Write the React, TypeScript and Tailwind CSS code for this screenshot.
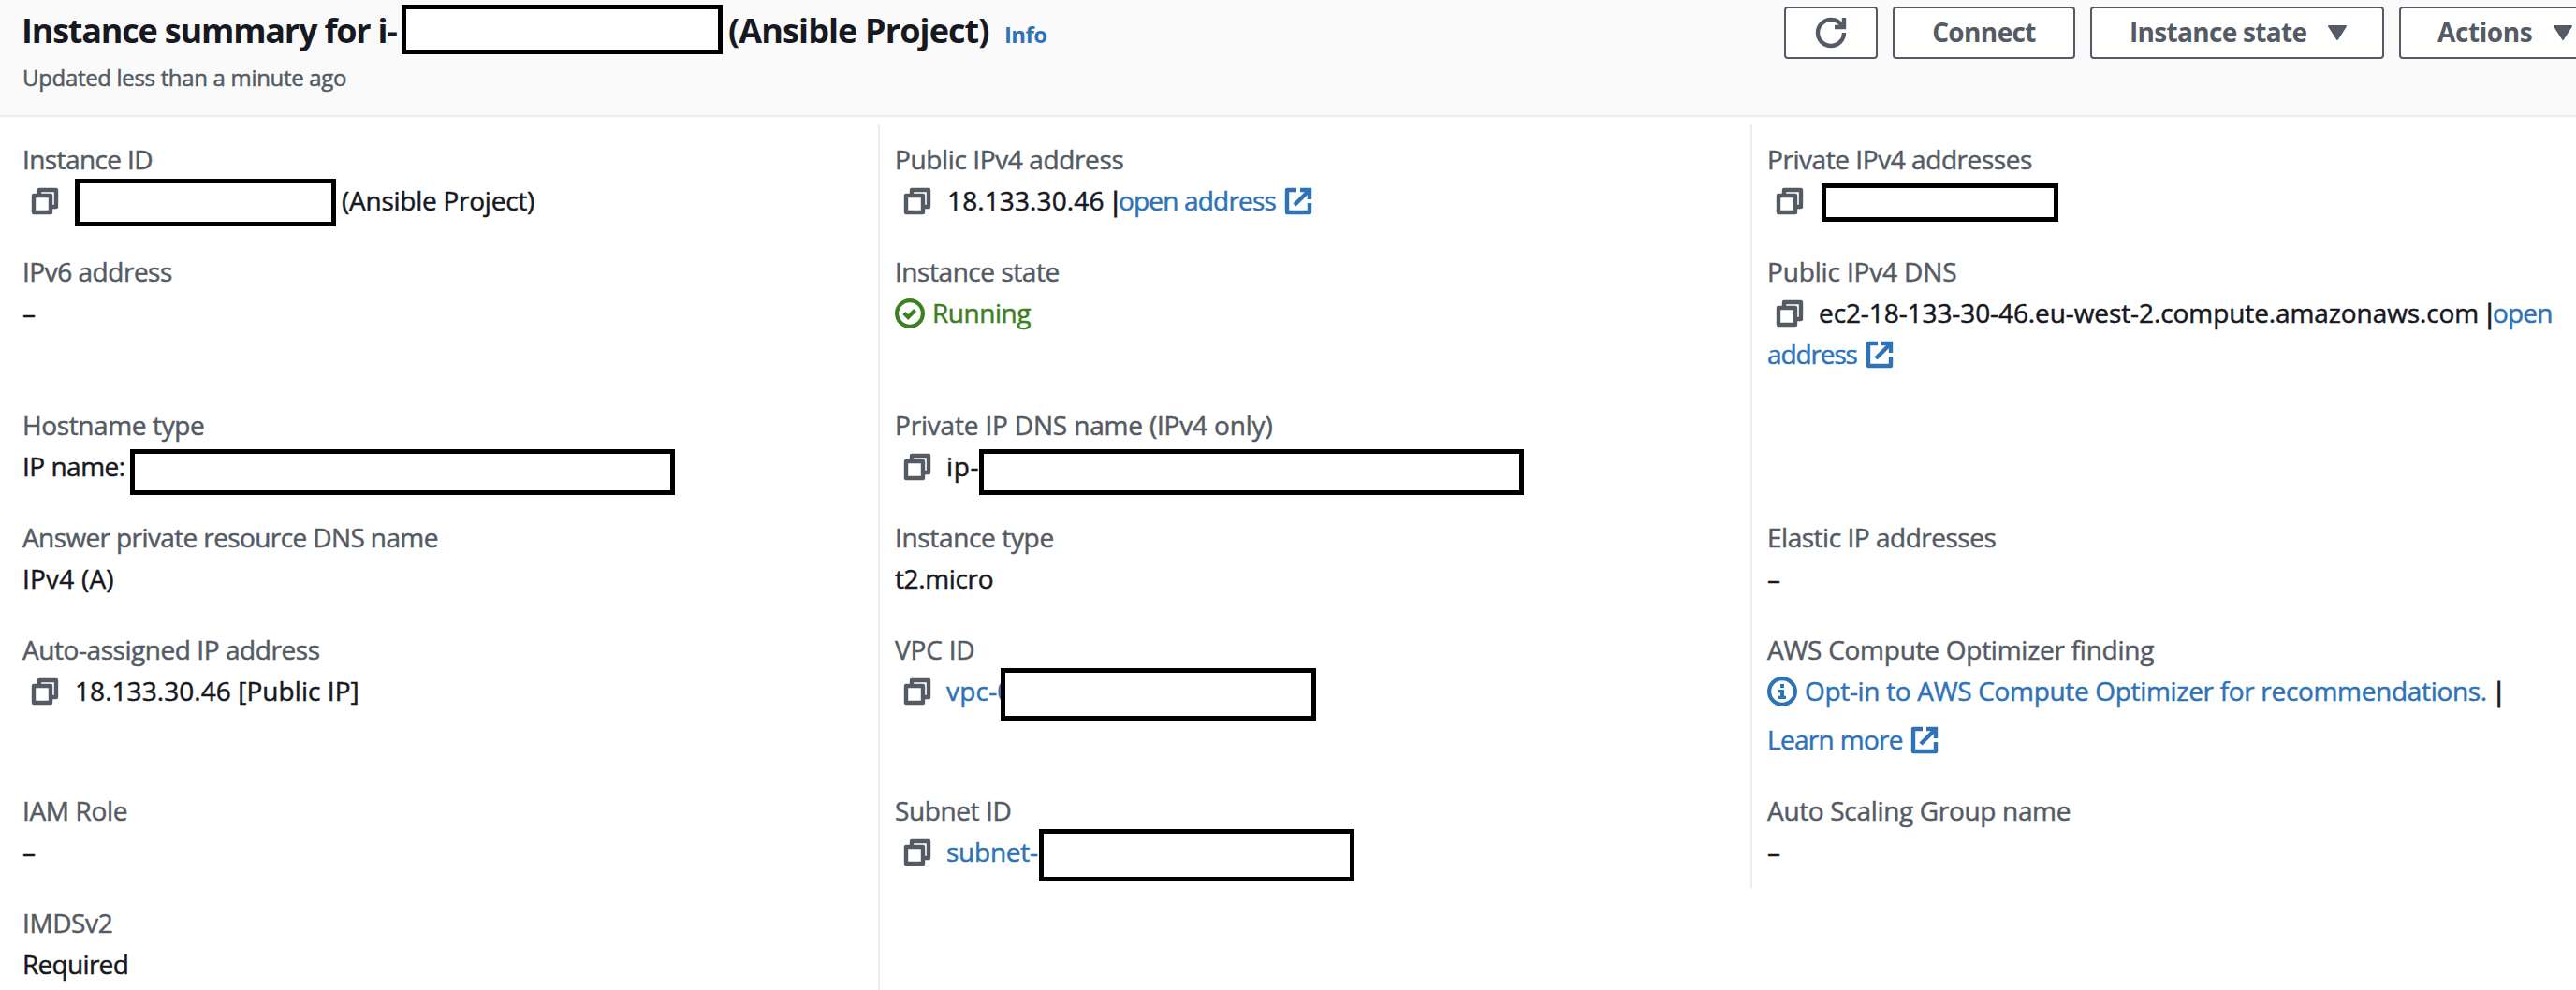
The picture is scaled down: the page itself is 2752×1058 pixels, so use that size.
import type { ReactNode } from "react";

function CopyIcon() {
  return (
    <svg viewBox="0 0 16 16" className="ml-2 mt-[7px] size-8 shrink-0 fill-none stroke-[#545b64] stroke-[2.2]" strokeLinejoin="round">
      <path d="M2 5h9v9H2z" />
      <path d="M5 5V2h9v9h-3" />
    </svg>
  );
}

function ExternalIcon() {
  return (
    <svg viewBox="0 0 16 16" className="mt-[7px] size-8 shrink-0 fill-none stroke-[#2e73b8] stroke-[2.2]" strokeLinejoin="round">
      <path d="M7 2H2v12h12V9" />
      <path d="M9 2h5v5" strokeLinejoin="miter" />
      <path d="M6 10l8-8" />
    </svg>
  );
}

function CheckIcon() {
  return (
    <svg viewBox="0 0 16 16" className="mt-[7px] size-8 shrink-0 fill-none stroke-[#3d8021] stroke-[2.1]">
      <circle cx="8" cy="8" r="6.95" />
      <path d="M4.9 7.8l2.2 2.2 3.7-3.7" />
    </svg>
  );
}

function InfoIcon() {
  return (
    <svg viewBox="0 0 16 16" className="mt-[7px] size-8 shrink-0">
      <circle cx="8" cy="8" r="6.95" className="fill-none stroke-[#2e73b8] stroke-[2.1]" />
      <path d="M7 4h2v2H7zM6 7h3v3.4h1V12H6v-1.6h1V8.6H6z" className="fill-[#2e73b8]" />
    </svg>
  );
}

function RefreshIcon() {
  return (
    <svg viewBox="0 0 16 16" className="size-8 overflow-visible fill-none stroke-[#545b64] stroke-[2.2]">
      <path d="M15 8c0 3.87-3.13 7-7 7s-7-3.13-7-7 3.13-7 7-7c2.79 0 5.2 1.63 6.33 4" />
      <path d="M15 0v5h-5" />
    </svg>
  );
}

function CaretIcon() {
  return (
    <svg viewBox="0 0 20 16" className="h-4 w-5 shrink-0 fill-[#545b64] stroke-[#545b64] stroke-2" strokeLinejoin="round">
      <path d="M1 1h18l-9 14z" />
    </svg>
  );
}

function Redacted({ className }: { className: string }) {
  return <span className={`relative block shrink-0 border-5 border-black bg-white ${className}`} />;
}

function Field({ label, labelClass, className = "h-[88px]", children }: { label: string; labelClass: string; className?: string; children: ReactNode }) {
  return (
    <div className={className}>
      <dt className={`h-[44px] text-[#545b64] ${labelClass}`}>{label}</dt>
      <dd>{children}</dd>
    </div>
  );
}

function Line({ className = "", children }: { className?: string; children: ReactNode }) {
  return <div className={`flex h-[44px] items-start ${className}`}>{children}</div>;
}

function Dash() {
  return <Line>–</Line>;
}

export default function App() {
  return (
    <div className="h-[1058px] w-[2752px] overflow-hidden whitespace-nowrap bg-white font-['Open_Sans','Noto_Sans',sans-serif] text-[28px] leading-[44px] text-[#16191f] [-webkit-text-stroke:0.5px]">
      <header className="flex h-[125px] items-start justify-between border-b-2 border-[#eaeded] bg-[#fafafa] pl-6">
        <div>
          <div className="-ml-px flex h-[65px] items-start [-webkit-text-stroke:0px]">
            <h1 className="flex items-start text-[36px] font-bold">
              <span className="mt-[11px] w-[406px] shrink-0 tracking-[-1.2px]">Instance summary for i-</span>
              <Redacted className="mt-[5px] h-[53px] w-[343px]" />
              <span className="ml-[6px] mt-[11px] w-[295px] tracking-[-0.89px]">(Ansible Project)</span>
            </h1>
            <a className="mt-[15px] text-[24px] font-bold tracking-[-0.6px] text-[#2e73b8]">Info</a>
          </div>
          <p className="text-[24px] leading-[36px] tracking-[-0.32px] text-[#545b64]">Updated less than a minute ago</p>
        </div>
        <div className="-mr-[39px] mt-[7px] flex gap-4 font-bold text-[#545b64] [-webkit-text-stroke:0px]">
          <button className="flex h-14 w-[100px] items-center justify-center rounded-[4px] border-2 border-[#545b64] bg-white">
            <RefreshIcon />
          </button>
          <button className="h-14 w-[195px] rounded-[4px] border-2 border-[#545b64] bg-white pb-0.5 tracking-[-0.62px]">Connect</button>
          <button className="flex h-14 w-[314px] items-center justify-between rounded-[4px] border-2 border-[#545b64] bg-white pl-[40px] pr-[38px] tracking-[-0.69px]">
            <span className="-mt-0.5">Instance state</span>
            <CaretIcon />
          </button>
          <button className="flex h-14 w-[228px] items-center justify-between rounded-[4px] border-2 border-[#545b64] bg-white pl-[39px] pr-[41px] tracking-[-0.41px]">
            <span className="-mt-0.5">Actions</span>
            <CaretIcon />
          </button>
        </div>
      </header>

      <div className="flex items-start pt-2">
        <dl className="flex w-[938px] flex-col gap-8 pl-6 pt-[15px]">
          <Field label="Instance ID" labelClass="tracking-[-0.6px]">
            <Line>
              <CopyIcon />
              <Redacted className="-mt-px ml-4 h-[51px] w-[279px]" />
              <span className="ml-[6px] tracking-[-0.25px]">(Ansible Project)</span>
            </Line>
          </Field>
          <Field label="IPv6 address" labelClass="tracking-[-0.48px]" className="h-[132px]">
            <Dash />
          </Field>
          <Field label="Hostname type" labelClass="tracking-[-0.38px]">
            <Line>
              <span className="w-[115px] tracking-[-0.5px]">IP name:</span>
              <Redacted className="mt-[4px] h-[49px] w-[582px]" />
            </Line>
          </Field>
          <Field label="Answer private resource DNS name" labelClass="tracking-[-0.61px]">
            <Line className="tracking-[0.2px]">IPv4 (A)</Line>
          </Field>
          <Field label="Auto-assigned IP address" labelClass="tracking-[-0.44px]" className="h-[140px]">
            <Line>
              <CopyIcon />
              <span className="ml-4 tracking-[0.06px]">18.133.30.46 [Public IP]</span>
            </Line>
          </Field>
          <Field label="IAM Role" labelClass="tracking-[-0.35px]">
            <Dash />
          </Field>
          <Field label="IMDSv2" labelClass="tracking-[-0.4px]">
            <Line className="tracking-[-0.7px]">Required</Line>
          </Field>
        </dl>

        <dl className="flex h-[925px] w-[932px] flex-col gap-8 border-l-2 border-[#eaeded] pl-4 pt-[15px]">
          <Field label="Public IPv4 address" labelClass="tracking-[-0.38px]">
            <Line>
              <CopyIcon />
              <span className="ml-4 w-[172px] tracking-[0.12px]">18.133.30.46</span>
              <span className="w-[11px] [-webkit-text-stroke:1px]">|</span>
              <a className="w-[176px] tracking-[-0.82px] text-[#2e73b8]">open address</a>
              <ExternalIcon />
            </Line>
          </Field>
          <Field label="Instance state" labelClass="tracking-[-0.45px]" className="h-[132px]">
            <Line>
              <CheckIcon />
              <span className="ml-2 tracking-[-0.46px] text-[#3d8021]">Running</span>
            </Line>
          </Field>
          <Field label="Private IP DNS name (IPv4 only)" labelClass="tracking-[-0.18px]">
            <Line>
              <CopyIcon />
              <span className="ml-[15px] w-[35px] tracking-[0.6px]">ip-</span>
              <Redacted className="mt-[4px] h-[49px] w-[582px]" />
            </Line>
          </Field>
          <Field label="Instance type" labelClass="tracking-[-0.35px]">
            <Line className="tracking-[-0.36px]">t2.micro</Line>
          </Field>
          <Field label="VPC ID" labelClass="tracking-[-0.2px]" className="h-[140px]">
            <Line>
              <CopyIcon />
              <a className="ml-[15px] w-[58px] tracking-[0.2px] text-[#2e73b8]">vpc-0</a>
              <Redacted className="-mt-[2px] h-[56px] w-[337px]" />
            </Line>
          </Field>
          <Field label="Subnet ID" labelClass="tracking-[-0.4px]">
            <Line>
              <CopyIcon />
              <a className="ml-[15px] w-[99px] tracking-[-0.25px] text-[#2e73b8]">subnet-</a>
              <Redacted className="-mt-[2px] h-[56px] w-[337px]" />
            </Line>
          </Field>
        </dl>

        <dl className="flex h-[816px] w-[882px] flex-col gap-8 border-l-2 border-[#eaeded] pl-4 pt-[15px]">
          <Field label="Private IPv4 addresses" labelClass="tracking-[-0.44px]">
            <Line>
              <CopyIcon />
              <Redacted className="ml-[18px] mt-[4px] h-[41px] w-[253px]" />
            </Line>
          </Field>
          <Field label="Public IPv4 DNS" labelClass="tracking-[-0.15px]" className="h-[132px]">
            <Line>
              <CopyIcon />
              <span className="ml-[15px] w-[709px] tracking-[-0.09px]">ec2-18-133-30-46.eu-west-2.compute.amazonaws.com</span>
              <span className="w-[11px] [-webkit-text-stroke:1px]">|</span>
              <a className="tracking-[-0.8px] text-[#2e73b8]">open</a>
            </Line>
            <Line>
              <a className="w-[104px] tracking-[-1.12px] text-[#2e73b8]">address</a>
              <ExternalIcon />
            </Line>
          </Field>
          <div className="h-[88px]" />
          <Field label="Elastic IP addresses" labelClass="tracking-[-0.48px]">
            <Dash />
          </Field>
          <Field label="AWS Compute Optimizer finding" labelClass="tracking-[-0.26px]" className="h-[140px]">
            <Line className="mb-2">
              <InfoIcon />
              <a className="ml-2 w-[734px] tracking-[-0.32px] text-[#2e73b8]">Opt-in to AWS Compute Optimizer for recommendations.</a>
              <span className="[-webkit-text-stroke:1px]">|</span>
            </Line>
            <Line>
              <a className="w-[152px] tracking-[-0.69px] text-[#2e73b8]">Learn more</a>
              <ExternalIcon />
            </Line>
          </Field>
          <Field label="Auto Scaling Group name" labelClass="tracking-[-0.33px]">
            <Dash />
          </Field>
        </dl>
      </div>
    </div>
  );
}
